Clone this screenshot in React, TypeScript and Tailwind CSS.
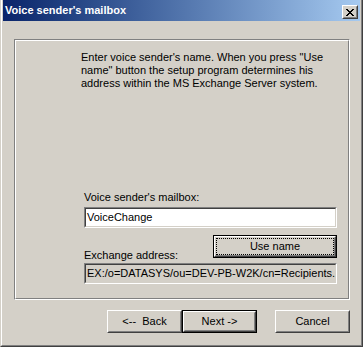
import React from "react";

function Btn({
  def,
  focus,
  w,
  children,
}: {
  def?: boolean;
  focus?: boolean;
  w: string;
  children: React.ReactNode;
}) {
  const outer = def
    ? "h-[23px] border border-black " + w
    : "h-[23px] " + w;
  return (
    <div className={outer}>
      <div className="h-full w-full border border-t-white border-l-white border-r-[#404040] border-b-[#404040]">
        <div className="h-full w-full border border-t-[#D4D0C8] border-l-[#D4D0C8] border-r-[#808080] border-b-[#808080]">
          {focus ? (
            <div className="h-full w-full border border-dotted border-black flex items-center justify-center whitespace-pre">
              {children}
            </div>
          ) : (
            <div className="h-full w-full flex items-center justify-center whitespace-pre">
              {children}
            </div>
          )}
        </div>
      </div>
    </div>
  );
}

function Edit({ bg, children }: { bg: string; children: React.ReactNode }) {
  return (
    <div className="h-[21px] w-full border border-t-[#808080] border-l-[#808080] border-r-white border-b-white">
      <div
        className={
          "h-full w-full border border-t-[#404040] border-l-[#404040] border-r-[#D4D0C8] border-b-[#D4D0C8] flex items-center pl-px overflow-hidden whitespace-nowrap " +
          bg
        }
      >
        {children}
      </div>
    </div>
  );
}

export default function App() {
  return (
    <div className="w-[363px] h-[347px] bg-[#D4D0C8] font-['Liberation_Sans',Arial,sans-serif] text-[11px] leading-[13px] text-black">
      <div className="w-full h-full border-l border-r border-b border-l-[#D4D0C8] border-r-[#404040] border-b-[#404040]">
        <div className="w-full h-full border-l border-r border-b border-l-white border-r-[#808080] border-b-[#808080] px-px pb-px flex flex-col">
          {/* Title bar */}
          <div className="h-[21px] w-full bg-linear-to-r from-[#0A246A] to-[#A6CAF0] flex items-start justify-between">
            <div className="pl-[2px] pt-[4px] text-white font-bold text-[11px] leading-[13px]">
              Voice sender's mailbox
            </div>
            <div className="mt-[5px] mr-[2px] w-[16px] h-[14px] bg-[#D4D0C8] border border-t-white border-l-white border-r-[#404040] border-b-[#404040]">
              <div className="w-full h-full border border-t-[#D4D0C8] border-l-[#D4D0C8] border-r-[#808080] border-b-[#808080] flex items-center justify-center">
                <svg width="8" height="7" viewBox="0 0 8 7" shapeRendering="crispEdges">
                  <path
                    fill="#000"
                    d="M0 0h2v1H0zM6 0h2v1H6zM1 1h2v1H1zM5 1h2v1H5zM2 2h4v1H2zM3 3h2v1H3zM2 4h4v1H2zM1 5h2v1H1zM5 5h2v1H5zM0 6h2v1H0zM6 6h2v1H6z"
                  />
                </svg>
              </div>
            </div>
          </div>

          {/* Body */}
          <div className="flex-1 flex flex-col">
            <div className="ml-[11px] mt-[18px] w-[336px] h-[261px] border border-t-[#808080] border-l-[#808080] border-r-white border-b-white">
              <div className="w-full h-full border border-t-white border-l-white border-r-[#808080] border-b-[#808080] flex flex-col">
                <div className="pt-[10px] pl-[65px]">
                  Enter voice sender's name. When you press "Use
                  <br />
                  name" button the setup program determines his
                  <br />
                  address within the MS Exchange Server system.
                </div>
                <div className="ml-[68px] w-[253px] mt-[101px] flex flex-col">
                  <div>Voice sender's mailbox:</div>
                  <div className="mt-[3px]">
                    <Edit bg="bg-white">VoiceChange</Edit>
                  </div>
                  <div className="mt-[7px] flex items-end justify-between">
                    <div>Exchange address:</div>
                    <div className="mb-[4px]">
                      <Btn def focus w="w-[124px]">
                        Use name
                      </Btn>
                    </div>
                  </div>
                  <div className="mt-[1px]">
                    <Edit bg="bg-[#D4D0C8]">
                      EX:/o=DATASYS/ou=DEV-PB-W2K/cn=Recipients.
                    </Edit>
                  </div>
                </div>
              </div>
            </div>

            <div className="mt-[10px] pr-[10px] flex justify-end">
              <Btn w="w-[75px]">{"<--  Back"}</Btn>
              <Btn def w="w-[75px]">
                {"Next ->"}
              </Btn>
              <div className="ml-[18px]">
                <Btn w="w-[75px]">Cancel</Btn>
              </div>
            </div>
          </div>
        </div>
      </div>
    </div>
  );
}
